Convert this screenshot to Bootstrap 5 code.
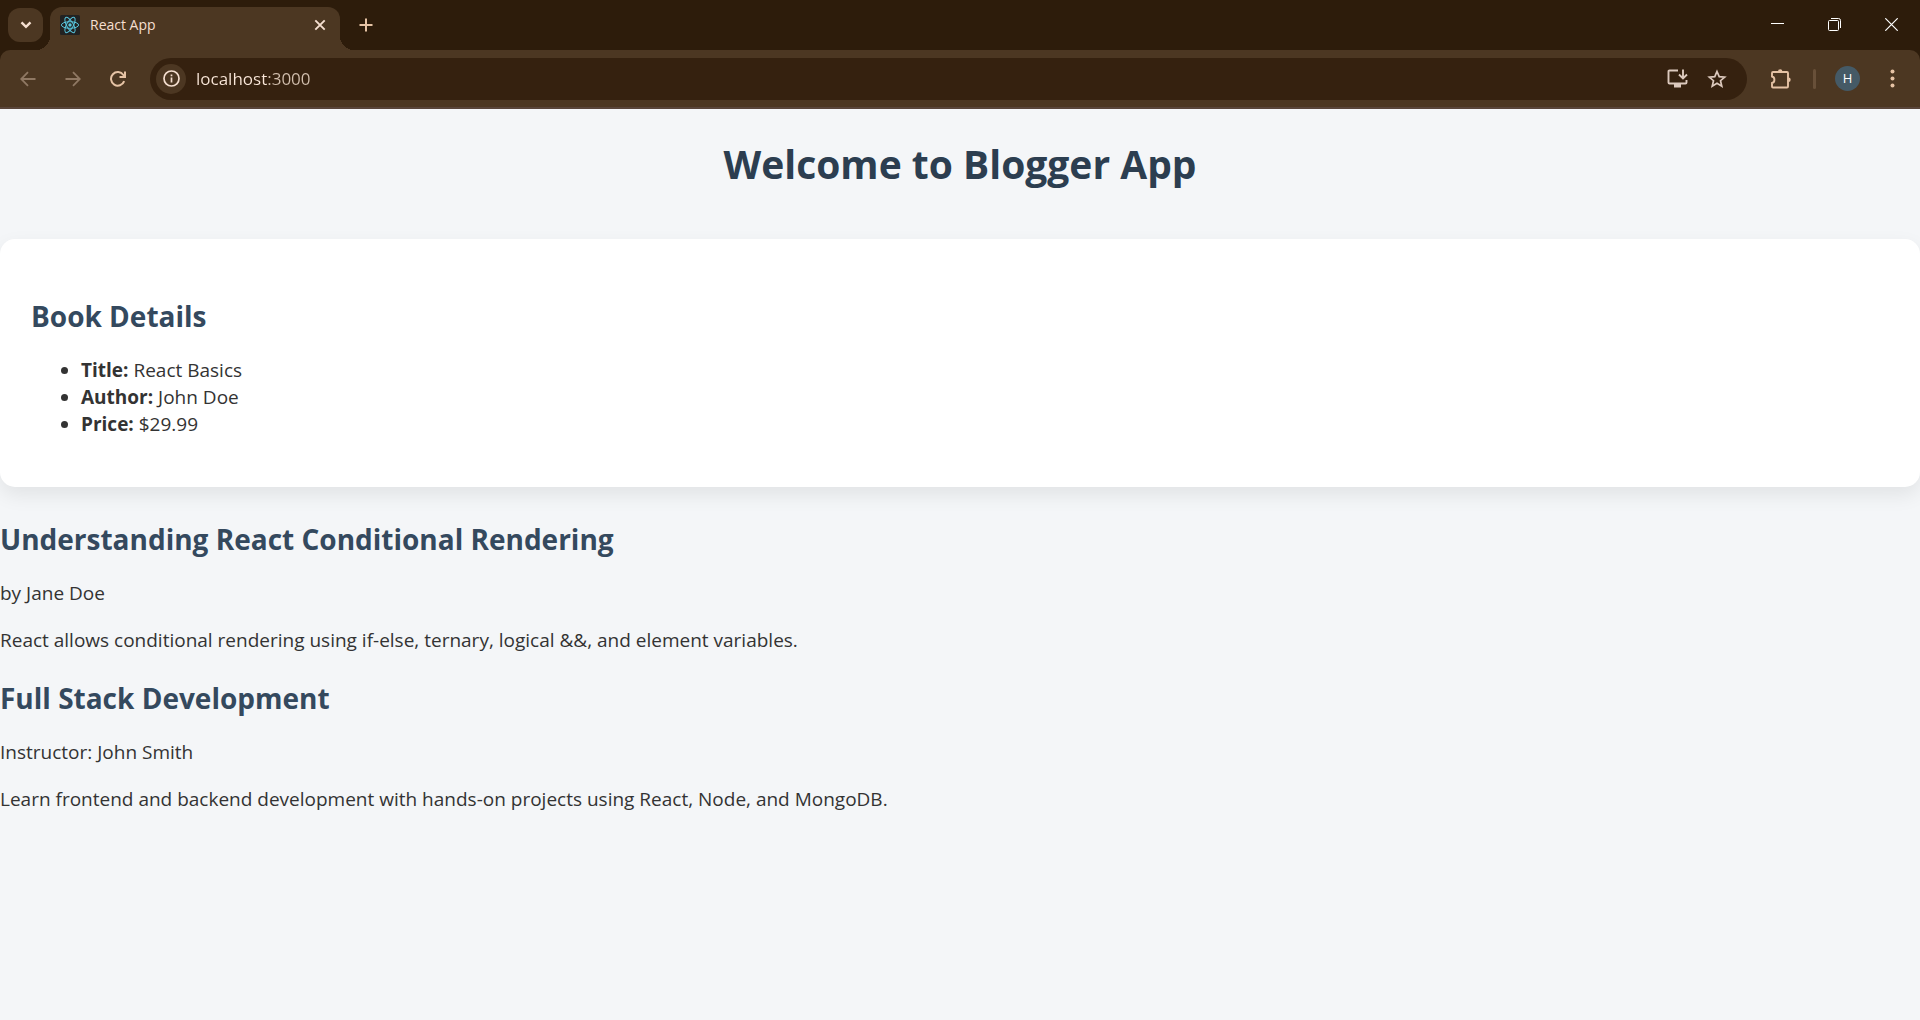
<!DOCTYPE html>
<html lang="en">
<head>
<meta charset="utf-8">
<meta name="viewport" content="width=device-width, initial-scale=1">
<title>React App</title>
<link href="https://cdn.jsdelivr.net/npm/bootstrap@5.3.0/dist/css/bootstrap.min.css" rel="stylesheet">
<style>
  :root { --frame: #2d1c0b; --bar: #4c3722; --field: #35210f; --cream: #f5dfd0; --tan: #e6c3a5; }
  body { font-family: "Open Sans", "Noto Sans", sans-serif; font-size: 19px; line-height: 27px; color: #333; background: #f4f6f8; }
  button { color: var(--cream); }
  svg { display: block; flex: none; }

  /* Browser frame */
  .tab-strip { background: var(--frame); height: 50px; }
  .tab-search { width: 35px; height: 34px; margin: 8px 7px 8px 8px; border-radius: 12px; background: var(--bar); }
  .site-tab { position: relative; width: 290px; height: 43px; margin-top: 7px; padding: 0 10px 7px; border-radius: 12px 12px 0 0; background: var(--bar); color: var(--cream); font-size: 14px; line-height: 20px; }
  .site-tab::before, .site-tab::after { content: ""; position: absolute; bottom: 0; width: 14px; height: 14px; }
  .site-tab::before { right: 100%; background: radial-gradient(circle at 0 0, transparent 14px, var(--bar) 14px); }
  .site-tab::after { left: 100%; background: radial-gradient(circle at 100% 0, transparent 14px, var(--bar) 14px); }
  .tab-title { padding-left: 10px; }
  .tab-close { width: 20px; height: 34px; }
  .tab-new { width: 34px; height: 50px; margin-left: 9px; color: var(--tan); }
  .win-btn { width: 57px; height: 48px; color: #fff; }
  .tool-wrap { background: var(--frame); }
  .tool-bar { height: 59px; padding-left: 5px; padding-right: 5px; background: var(--bar); border-bottom: 2px solid #59453a; border-radius: 10px 10px 0 0; }
  .tool-btn { width: 45px; height: 42px; color: var(--tan); }
  .tool-btn:disabled { color: #8f7863; }
  .address { height: 42px; margin: 0 11px 0 10px; padding: 0 10px 0 6px; border-radius: 21px; background: var(--field); }
  .site-info { width: 30px; height: 30px; background: var(--bar); }
  .url-input { margin-left: 10px; font-size: 17px; line-height: 24px; outline: 0; color: transparent; background: linear-gradient(90deg, #fbe8da 71px, #d2bfae 71px); -webkit-background-clip: text; background-clip: text; }
  .addr-btn { width: 40px; height: 40px; color: #dcc9bd; }
  .bar-rule { width: 3px; height: 20px; margin: 0 7px 0 10px; border-radius: 2px; background: #685039; }
  .profile { width: 25px; height: 25px; margin: 0 10px 0 12px; background: #455a66; color: #fff; font-size: 13px; line-height: 25px; }

  /* Page */
  h1 { margin: 28px 0 49px; font-size: 39px; line-height: 53px; font-weight: 700; color: #2c3e50; }
  h2 { margin: 25px 0 21px; font-size: 28px; line-height: 40px; font-weight: 700; color: #34495e; }
  p, .detail-list { margin: 0 0 20px; }
  .detail-list { padding-left: 50px; }
  .book-panel { margin-bottom: 32px; padding: 32px 31px 29px; border-radius: 15px; background: #fff; box-shadow: 0 8px 20px rgba(0, 0, 0, .08); display: flow-root; }
  .post h2 { margin-top: 0; }
  .post + .post { margin-top: 24px; }
</style>
<script src="https://cdn.jsdelivr.net/npm/bootstrap@5.3.0/dist/js/bootstrap.bundle.min.js"></script>
</head>
<body>
<header>
  <div class="tab-strip d-flex align-items-start">
    <button type="button" class="tab-search border-0 p-0 d-flex align-items-center justify-content-center" aria-label="Search tabs">
      <svg width="12" height="8" viewBox="0 0 12 8" fill="none" stroke="currentColor" stroke-width="2.4"><path d="M1.5 1.3 6 5.8l4.500-4.500"/></svg>
    </button>
    <div class="site-tab d-flex align-items-center">
      <svg width="20" height="20" viewBox="0 0 20 20" fill="none" stroke="#58c4dc" stroke-width="1"><rect width="20" height="20" rx="1.500" fill="#222" stroke="none"/><ellipse cx="10" cy="10" rx="8.600" ry="3.300"/><ellipse cx="10" cy="10" rx="8.600" ry="3.300" transform="rotate(60 10 10)"/><ellipse cx="10" cy="10" rx="8.600" ry="3.300" transform="rotate(120 10 10)"/><circle cx="10" cy="10" r="1.700" fill="#58c4dc" stroke="none"/></svg>
      <span class="tab-title flex-grow-1">React App</span>
      <button type="button" class="tab-close border-0 p-0 bg-transparent d-flex align-items-center justify-content-center" aria-label="Close tab">
        <svg width="12" height="12" viewBox="0 0 12 12" stroke="currentColor" stroke-width="1.900"><path d="m1.300 1.300 9.400 9.400m0-9.400-9.400 9.400"/></svg>
      </button>
    </div>
    <button type="button" class="tab-new border-0 p-0 bg-transparent d-flex align-items-center justify-content-center" aria-label="New tab">
      <svg width="14" height="14" viewBox="0 0 14 14" stroke="currentColor" stroke-width="2"><path d="M7 .5v13M.5 7h13"/></svg>
    </button>
    <div class="d-flex ms-auto">
      <button type="button" class="win-btn border-0 p-0 bg-transparent d-flex align-items-center justify-content-center" aria-label="Minimize"><svg width="13" height="13" viewBox="0 0 13 13"><path d="M0 5h13v1H0z" fill="currentColor"/></svg></button>
      <button type="button" class="win-btn border-0 p-0 bg-transparent d-flex align-items-center justify-content-center" aria-label="Restore"><svg width="13" height="13" viewBox="0 0 13 13" fill="none" stroke="currentColor"><rect x=".5" y="2.500" width="10" height="10" rx="1"/><path d="M3 .5h7.500a2 2 0 0 1 2 2V10"/></svg></button>
      <button type="button" class="win-btn border-0 p-0 bg-transparent d-flex align-items-center justify-content-center" aria-label="Close"><svg width="13" height="13" viewBox="0 0 13 13" stroke="currentColor" stroke-width="1.200"><path d="m.3.3 12.400 12.400m0-12.400L.3 12.700"/></svg></button>
    </div>
  </div>
  <div class="tool-wrap">
    <div class="tool-bar d-flex align-items-center">
      <button type="button" disabled class="tool-btn border-0 p-0 bg-transparent d-flex align-items-center justify-content-center" aria-label="Back"><svg width="16" height="16" viewBox="0 0 16 16" fill="none" stroke="currentColor" stroke-width="1.800"><path d="M15.500 8H1.500M8 1.200 1.200 8 8 14.800"/></svg></button>
      <button type="button" disabled class="tool-btn border-0 p-0 bg-transparent d-flex align-items-center justify-content-center" aria-label="Forward"><svg width="16" height="16" viewBox="0 0 16 16" fill="none" stroke="currentColor" stroke-width="1.800"><path d="M.5 8h14M8 1.200 14.800 8 8 14.800"/></svg></button>
      <button type="button" class="tool-btn border-0 p-0 bg-transparent d-flex align-items-center justify-content-center" aria-label="Reload"><svg width="16" height="16" viewBox="0 0 16 16" fill="none" stroke="currentColor" stroke-width="2"><path d="M14.200 10.200A6.800 6.800 0 1 1 13.400 4L14.800 6M15 .5V6H9.500"/></svg></button>
      <div class="address flex-grow-1 d-flex align-items-center">
        <button type="button" class="site-info rounded-circle border-0 p-0 d-flex align-items-center justify-content-center" aria-label="Site information"><svg width="17" height="17" viewBox="0 0 17 17" fill="none" stroke="currentColor" stroke-width="1.700"><circle cx="8.500" cy="8.500" r="7.500"/><path d="M8.500 7.500v5M8.500 4.500v1.800"/></svg></button>
        <input class="url-input border-0 p-0 flex-grow-1" type="text" aria-label="Address" value="localhost:3000" spellcheck="false">
        <button type="button" class="addr-btn border-0 p-0 bg-transparent d-flex align-items-center justify-content-center" aria-label="Install app"><svg width="21" height="19" viewBox="0 0 21 19" fill="none" stroke="currentColor" stroke-width="1.900"><path d="M11 1.500H2.500q-1 0-1 1v11q0 1 1 1h16q1 0 1-1V11M16 .5v8M12 5.500l4 4 4-4"/><path d="M7 15h7v3.500H7z" fill="currentColor" stroke="none"/></svg></button>
        <button type="button" class="addr-btn border-0 p-0 bg-transparent d-flex align-items-center justify-content-center" aria-label="Bookmark"><svg width="20" height="20" viewBox="0 0 20 20" fill="none" stroke="currentColor" stroke-width="1.700"><path d="m10 2.500 2.200 5.100 5.500.5-4.200 3.600 1.300 5.500-4.800-2.900-4.800 2.900 1.300-5.500-4.200-3.600 5.500-.5z"/></svg></button>
      </div>
      <button type="button" class="tool-btn border-0 p-0 bg-transparent d-flex align-items-center justify-content-center" aria-label="Extensions"><svg width="22" height="22" viewBox="0 0 22 22" fill="none" stroke="currentColor" stroke-width="1.900"><path d="M3 4h14q1 0 1 1v13.500q0 1-1 1H3q-1 0-1-1V15c3.200-.5 3.200-6 0-6.500V5q0-1 1-1z"/><path d="M8 3.500a2.200 2.200 0 0 1 4.400 0zM18.500 9.500a2.200 2.200 0 0 1 0 4.400z" fill="currentColor" stroke="none"/></svg></button>
      <span class="bar-rule"></span>
      <button type="button" class="profile rounded-circle border-0 p-0 text-center" aria-label="Profile H">H</button>
      <button type="button" class="tool-btn border-0 p-0 bg-transparent d-flex align-items-center justify-content-center" aria-label="Menu"><svg width="5" height="19" viewBox="0 0 5 19" fill="currentColor"><circle cx="2.500" cy="2.500" r="2"/><circle cx="2.500" cy="9.500" r="2"/><circle cx="2.500" cy="16.500" r="2"/></svg></button>
    </div>
  </div>
</header>
<main>
  <h1 class="text-center">Welcome to Blogger App</h1>
  <section class="book-panel">
    <h2>Book Details</h2>
    <ul class="detail-list">
      <li><strong>Title:</strong> React Basics</li>
      <li><strong>Author:</strong> John Doe</li>
      <li><strong>Price:</strong> $29.99</li>
    </ul>
  </section>
  <article class="post">
    <h2>Understanding React Conditional Rendering</h2>
    <p>by Jane Doe</p>
    <p>React allows conditional rendering using if-else, ternary, logical &amp;&amp;, and element variables.</p>
  </article>
  <article class="post">
    <h2>Full Stack Development</h2>
    <p>Instructor: John Smith</p>
    <p>Learn frontend and backend development with hands-on projects using React, Node, and MongoDB.</p>
  </article>
</main>
</body>
</html>
